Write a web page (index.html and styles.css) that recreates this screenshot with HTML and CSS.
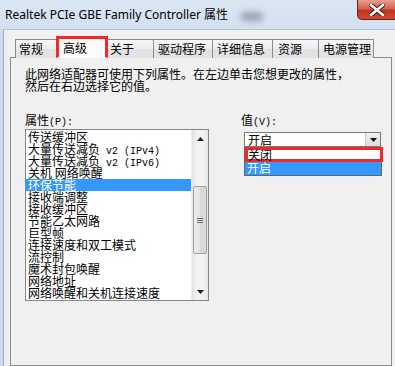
FILE: index.html
```html
<!DOCTYPE html>
<html lang="zh-CN">
<head>
<meta charset="utf-8">
<title>属性</title>
<link rel="stylesheet" href="styles.css">
</head>
<body>
<div class="window">
  <div class="titlebar">
    <span class="title">Realtek PCIe GBE Family Controller 属性</span>
    <span class="glass-blob"></span>
    <div class="close">
      <svg width="16" height="12" viewBox="0 0 16 12">
        <path d="M2 1 L14 11 M14 1 L2 11" stroke="#3a1010" stroke-width="4.5" stroke-linecap="square"/>
        <path d="M2 1 L14 11 M14 1 L2 11" stroke="#ffffff" stroke-width="2.6" stroke-linecap="square"/>
      </svg>
    </div>
  </div>
  <div class="client">
    <div class="tabs">
      <div class="tab tab-general">常规</div>
      <div class="tab active">高级</div>
      <div class="tab tab-about">关于</div>
      <div class="tab tab-driver">驱动程序</div>
      <div class="tab tab-details">详细信息</div>
      <div class="tab tab-res">资源</div>
      <div class="tab tab-power">电源管理</div>
    </div>
    <div class="panel">
      <p class="desc">此网络适配器可使用下列属性。在左边单击您想更改的属性，<br>然后在右边选择它的值。</p>
      <div class="cols">
        <div class="col-left">
          <div class="label">属性<span class="lat">(P):</span></div>
          <div class="listbox">
            <ul class="items">
              <li>传送缓冲区</li>
              <li>大量传送减负<span class="lat"> v2 (IPv4)</span></li>
              <li>大量传送减负<span class="lat"> v2 (IPv6)</span></li>
              <li>关机 网络唤醒</li>
              <li class="selected">环保节能</li>
              <li>接收端调整</li>
              <li>接收缓冲区</li>
              <li>节能乙太网路</li>
              <li>巨型帧</li>
              <li>连接速度和双工模式</li>
              <li>流控制</li>
              <li>魔术封包唤醒</li>
              <li>网络地址</li>
              <li>网络唤醒和关机连接速度</li>
            </ul>
            <div class="vscroll">
              <div class="sb-arrow"><svg width="7" height="4" viewBox="0 0 7 4"><path d="M0 4 L3.5 0 L7 4 Z" fill="#222"/></svg></div>
              <div class="sb-track-top"></div>
              <div class="sb-thumb"><span></span><span></span><span></span></div>
              <div class="sb-track-bottom"></div>
              <div class="sb-arrow"><svg width="7" height="4" viewBox="0 0 7 4"><path d="M0 0 L3.5 4 L7 0 Z" fill="#222"/></svg></div>
            </div>
          </div>
        </div>
        <div class="col-right">
          <div class="label label-value">值<span class="lat">(V):</span></div>
          <div class="combo">
            <span class="combo-text">开启</span>
            <div class="combo-btn"><svg width="7" height="4" viewBox="0 0 7 4"><path d="M0 0 L3.5 4 L7 0 Z" fill="#111"/></svg></div>
          </div>
          <ul class="droplist">
            <li class="marked">关闭</li>
            <li class="selected">开启</li>
          </ul>
        </div>
      </div>
    </div>
  </div>
</div>
</body>
</html>
```

FILE: styles.css
```css
* { box-sizing: border-box; }
html, body { margin: 0; padding: 0; }
body {
  width: 395px;
  height: 366px;
  overflow: hidden;
  font-family: "Noto Sans CJK SC", sans-serif;
  font-size: 12px;
  color: #000;
}
.window {
  width: 395px;
  height: 366px;
  overflow: hidden;
  background: #cddcee;
  display: flex;
  flex-direction: column;
}
.titlebar {
  height: 29px;
  flex: none;
  display: flex;
  align-items: flex-start;
  background: linear-gradient(#dbe6f3, #d3e0ef);
}
.title {
  font-family: "Noto Sans", "Noto Sans CJK SC", sans-serif;
  font-size: 12px;
  line-height: 14px;
  margin: 8px 0 0 5px;
  white-space: nowrap;
}
.glass-blob {
  width: 22px;
  height: 9px;
  margin: 12px 0 0 13px;
  background: rgba(70, 80, 100, 0.45);
  border-radius: 6px;
  filter: blur(3px);
}
.close {
  margin-left: auto;
  margin-right: -8px;
  width: 46px;
  height: 20px;
  border: 1px solid #6b1f1f;
  border-top: none;
  border-radius: 0 0 5px 5px;
  background: linear-gradient(#e8a090 0%, #d6614c 45%, #c2341f 55%, #cf4a33 100%);
  display: flex;
  align-items: center;
  justify-content: center;
  padding-right: 6px;
}
.client {
  flex: 1;
  margin-left: 3px;
  border-left: 1px solid #9bafc6;
  border-top: 1px solid #b4c4d6;
  background: #f0f0f0;
  padding: 7px 3px 0 6px;
  display: flex;
  flex-direction: column;
}
.tabs {
  display: flex;
  align-items: flex-end;
  padding-left: 5px;
  height: 21px;
  position: relative;
  z-index: 1;
  margin-bottom: -1px;
}
.tab {
  height: 19px;
  border: 1px solid #898c95;
  border-bottom: none;
  margin-right: -1px;
  background: linear-gradient(#f7f7f7, #ececec 50%, #e2e2e2 51%, #e4e4e4);
  line-height: 17px;
  padding-left: 3px;
  white-space: nowrap;
}
.tab-general { width: 44px; }
.tab-about { width: 47px; padding-left: 2px; }
.tab-driver { width: 60px; padding-left: 4px; }
.tab-details { width: 61px; padding-left: 4px; }
.tab-res { width: 47px; padding-left: 5px; }
.tab-power { width: 56px; padding-left: 4px; }
.tab.active {
  height: 22px;
  width: 52px;
  margin: 0 -1px 0 -2px;
  background: #fbfbfb;
  border: 3px solid #f4282a;
  border-bottom: 1px solid #fbfbfb;
  padding-left: 4px;
  line-height: 18px;
  position: relative;
  z-index: 2;
}
.panel {
  flex: 1;
  border: 1px solid #898c95;
  background: #f0f0f0;
  padding: 10px 0 0 14px;
}
.desc {
  margin: 0;
  line-height: 12px;
  white-space: nowrap;
}
.lat {
  font-family: "Liberation Mono", monospace;
  font-size: 10px;
}
.cols {
  display: flex;
  margin-top: 22px;
}
.label {
  line-height: 12px;
  height: 12px;
  white-space: nowrap;
}
.col-left {
  width: 184px;
  display: flex;
  flex-direction: column;
  gap: 3px;
}
.listbox {
  height: 172px;
  border: 1px solid #828790;
  background: #fff;
  display: flex;
}
.items {
  list-style: none;
  margin: 0;
  padding: 1px 0 0 0;
  flex: 1;
}
.items li {
  height: 12px;
  line-height: 12px;
  padding-left: 2px;
  white-space: nowrap;
}
.items li.selected, .droplist li.selected {
  background: #3399ff;
  color: #fff;
}
.vscroll {
  width: 17px;
  flex: none;
  display: flex;
  flex-direction: column;
  background: linear-gradient(90deg, #e3e3e3, #f2f2f2 30%, #f2f2f2 70%, #e6e6e6);
  border-left: 1px solid #ececec;
}
.sb-arrow {
  height: 17px;
  display: flex;
  align-items: center;
  justify-content: center;
}
.sb-track-top { height: 39px; }
.sb-thumb {
  height: 68px;
  margin: 0 1px;
  border: 1px solid #a0a0a0;
  border-radius: 2px;
  background: linear-gradient(90deg, #ececec, #e2e2e2 50%, #d6d6d6 51%, #dadada);
  display: flex;
  flex-direction: column;
  justify-content: center;
  align-items: center;
  gap: 1px;
}
.sb-thumb span {
  width: 6px;
  height: 1px;
  background: #707070;
}
.sb-track-bottom { flex: 1; }
.col-right {
  margin-left: 35px;
  display: flex;
  flex-direction: column;
}
.label-value { margin-left: -3px; height: 15px; }
.combo {
  margin-top: 3px;
  width: 137px;
  height: 15px;
  border: 1px solid #7a7a7a;
  background: #fff;
  display: flex;
  align-items: center;
}
.combo-text {
  flex: 1;
  padding-left: 3px;
  line-height: 12px;
}
.combo-btn {
  width: 15px;
  height: 13px;
  background: linear-gradient(#f2f2f2, #dcdcdc);
  border-left: 1px solid #c8c8c8;
  display: flex;
  align-items: center;
  justify-content: center;
}
.droplist {
  list-style: none;
  margin: 0;
  padding: 0;
  width: 138px;
  border: 1px solid #646464;
  border-top: none;
  background: #fff;
}
.droplist li {
  height: 13px;
  line-height: 12px;
  padding-left: 2px;
}
.droplist li.marked {
  height: 15px;
  margin-right: -2px;
  border: 3px solid #f4282a;
  padding-left: 0;
  line-height: 9px;
}
```
